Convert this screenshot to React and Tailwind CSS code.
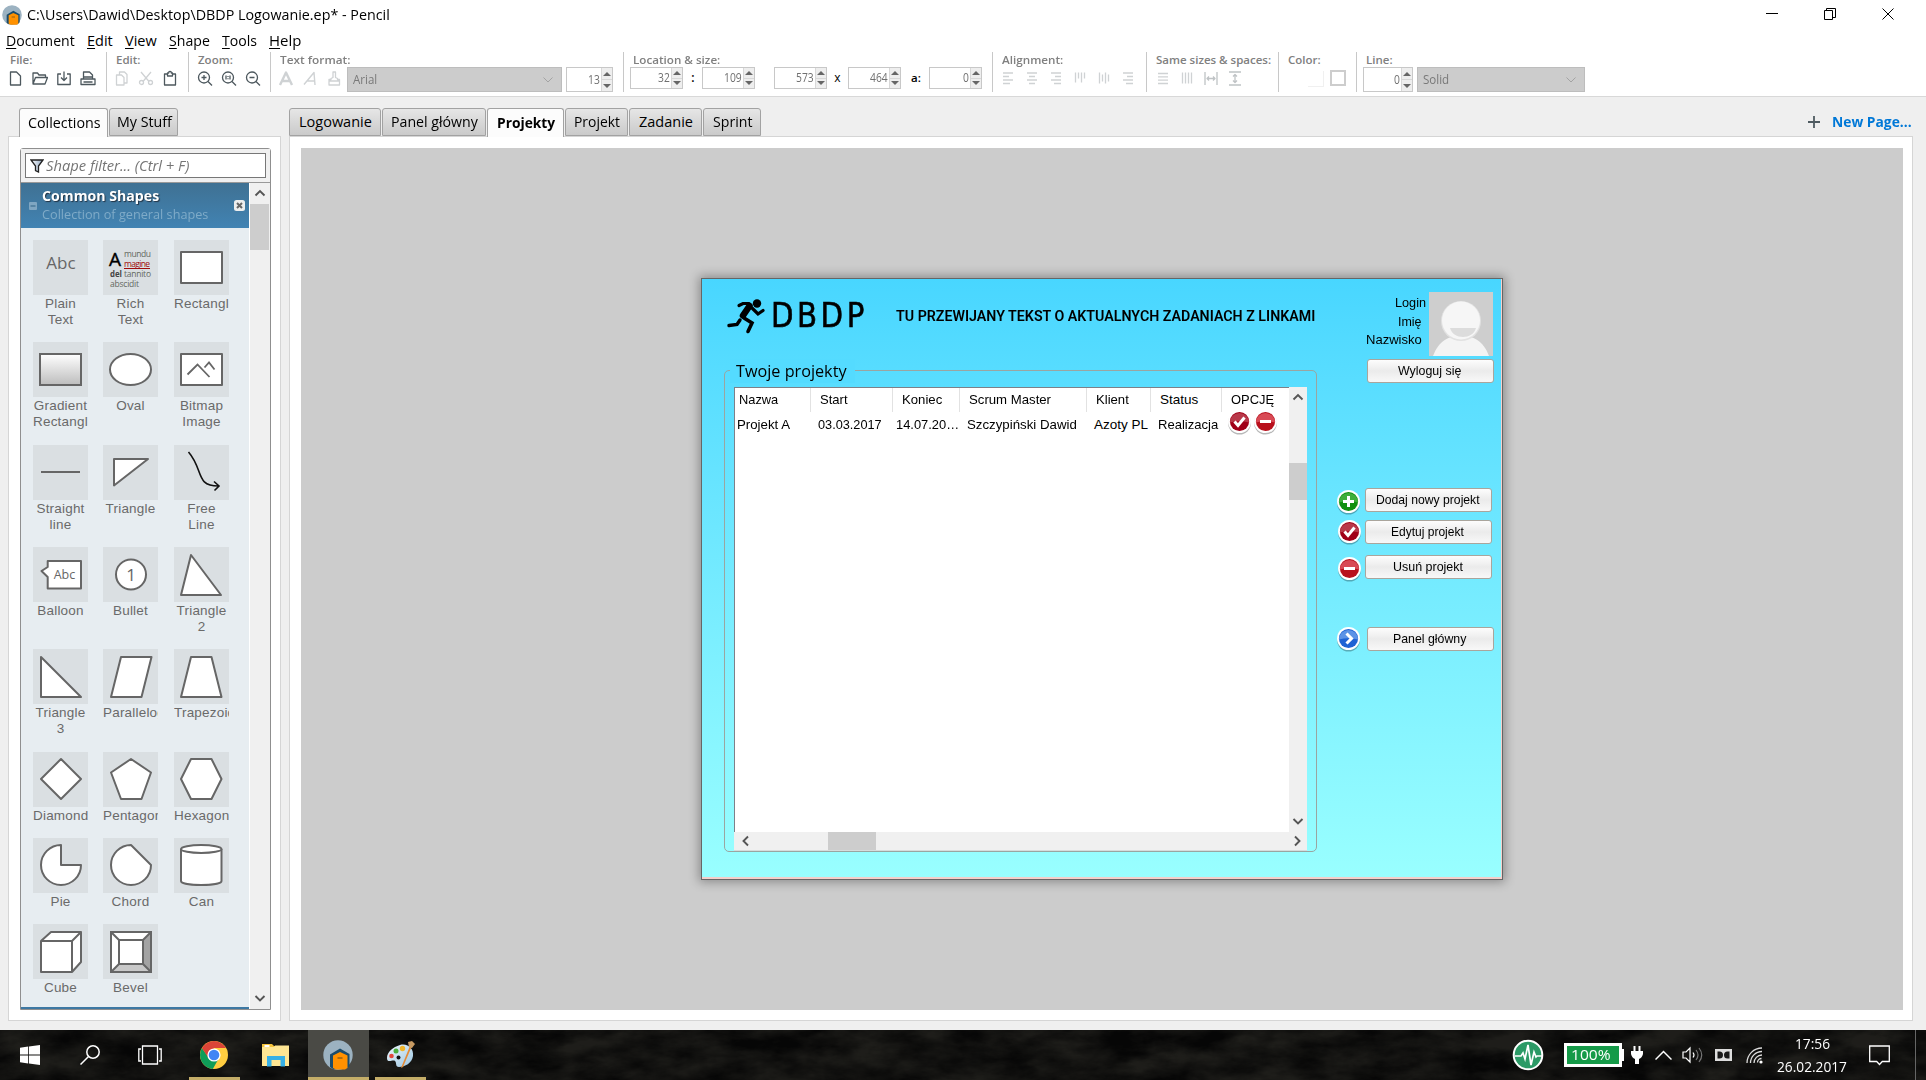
import React, { useLayoutEffect, useRef, useState } from "react";

/* Text condensed or widened to an exact run length. */
function Fit({ w, className = "", children }) {
  const ref = useRef(null);
  const [scale, setScale] = useState(1);
  useLayoutEffect(() => {
    const natural = ref.current.offsetWidth;
    if (natural) setScale(w / natural);
  }, [w]);
  return (
    <span className={"inline-block shrink-0 whitespace-nowrap text-left " + className} style={{ width: w }}>
      <span ref={ref} className="inline-block origin-left whitespace-nowrap" style={{ transform: `scaleX(${scale})` }}>
        {children}
      </span>
    </span>
  );
}

const ui = "font-['Open_Sans','Noto_Sans',sans-serif]";
const arial = "font-['Liberation_Sans',Arial,sans-serif]";

function PencilLogo({ className }) {
  return (
    <svg viewBox="0 0 30 30" preserveAspectRatio="none" className={className}>
      <circle cx="15" cy="15" r="14.7" fill="#9cb2c1" />
      <path d="M7 27V14.500L17 8.500l9.500 5.500V26l-3 3H10z" fill="#1b4c6b" />
      <path d="M10 28V15.500l7-3.500 7.500 3.500V28l-2.500 1.500h-9z" fill="#ff9100" />
      <path d="M14.500 18h5" stroke="#5d4a20" strokeWidth="1" />
    </svg>
  );
}

function TitleBar() {
  return (
    <div className="flex h-7 items-center">
      <PencilLogo className="ml-0.5 mt-0.5 h-5 w-5 shrink-0" />
      <Fit w={363} className="ml-[5px] mt-0.5 text-[14.5px] leading-5">C:\Users\Dawid\Desktop\DBDP Logowanie.ep* - Pencil</Fit>
      <div className="ml-auto mr-8 flex items-center gap-[46px]">
        <svg className="h-3 w-3" viewBox="0 0 12 12"><path d="M0 5.500h12" stroke="#000" /></svg>
        <svg className="h-3 w-3" viewBox="0 0 12 12" fill="none" stroke="#000"><path d="M.5 2.500h8v9h-8zM2.500 2.500v-2h9v9h-3" /></svg>
        <svg className="h-3 w-3" viewBox="0 0 12 12"><path d="M.5.500l11 11M11.500.500l-11 11" stroke="#000" /></svg>
      </div>
    </div>
  );
}

const menus = [
  ["Document", 69, "w-[81px]"],
  ["Edit", 26, "w-[38px]"],
  ["View", 32, "w-[44px]"],
  ["Shape", 41, "w-[53px]"],
  ["Tools", 35, "w-[47px]"],
  ["Help", 32, "w-[40px]"],
];

function MenuBar() {
  return (
    <div className="flex h-6 items-center pl-1.5">
      {menus.map(([m, w, box]) => (
        <div key={m} className={box}>
          <Fit w={w} className="text-[14.5px] leading-5">
            <span className="underline underline-offset-2">{m[0]}</span>{m.slice(1)}
          </Fit>
        </div>
      ))}
    </div>
  );
}

const D = "#4d585e";
const L = "#cfd2d4";
function Ico({ c = D, children, sw = 1.3 }) {
  return (
    <span className="flex w-6 shrink-0 items-center justify-center">
      <svg viewBox="0 0 16 16" className="h-4 w-4 -translate-y-[1.5px]" fill="none" stroke={c} strokeWidth={sw} strokeLinejoin="round">{children}</svg>
    </span>
  );
}

function Group({ label, lw, box, labelBox, children, last }) {
  return (
    <div className={"flex h-10 flex-col " + box + (last ? "" : " border-r border-[#c8c8c8]")}>
      <div className={"flex h-[15px] items-center " + labelBox}>
        <Fit w={lw} className="text-[11.5px] font-semibold leading-[15px] text-[#808080]">{label}</Fit>
      </div>
      <div className="flex h-[25px]">{children}</div>
    </div>
  );
}

function Spin({ v, vw, box }) {
  return (
    <div className={"flex shrink-0 justify-end border border-[#c8c8c8] bg-white " + box}>
      <Fit w={vw} className="mr-px self-center text-[12px] leading-4 text-[#707070]">{v}</Fit>
      <div className="flex w-[11px] flex-col gap-px border-l border-[#d8d8d8] bg-[#d8d8d8]">
        <div className="flex flex-1 items-center justify-center bg-[#eee]"><svg className="h-1 w-2" viewBox="0 0 8 4"><path d="M0 4l4-4 4 4z" fill="#666" /></svg></div>
        <div className="flex flex-1 items-center justify-center bg-[#eee]"><svg className="h-1 w-2" viewBox="0 0 8 4"><path d="M0 0l4 4 4-4z" fill="#666" /></svg></div>
      </div>
    </div>
  );
}

function Select({ v, vw, box }) {
  return (
    <div className={"flex h-[25px] shrink-0 items-center justify-between border border-[#bdbdbd] bg-[#ccc] pl-[5px] pr-2 " + box}>
      <Fit w={vw} className="text-[12px] leading-4 text-[#787878]">{v}</Fit>
      <svg className="h-1.5 w-2.5" viewBox="0 0 10 6" fill="none" stroke="#a3a3a3"><path d="M.5.500L5 5 9.500.500" /></svg>
    </div>
  );
}

function Toolbar() {
  return (
    <div className="flex h-[44px] text-black">
      <Group label="File:" lw={22} box="w-[107px] pl-1" labelBox="pl-1.5">
        <Ico><path d="M2.500 1.500h6l4 4v9h-10z" /></Ico>
        <Ico><path d="M1 13.500v-11h4.500l1.500 2h6.500v2.500M1 13.500L3.500 7H15.500L13 13.500z" /></Ico>
        <Ico><path d="M5 3.500H1.800v10.500h12.400V3.500H11M8 1v8.500M5 7l3 3 3-3" /></Ico>
        <Ico><path d="M3.500 8V1.500h6l3 3V8M1 8.500h14V14H1zM3.500 11.500h9M3.500 6.500h9" /></Ico>
      </Group>
      <Group label="Edit:" lw={24} box="w-[82px] pl-[3px]" labelBox="pl-1.5">
        <Ico c={L}><path d="M2.500 4.500h5l2.500 2.500v7.500H2.500zM5.500 4V1.500h5L13 4v8.500h-3" /></Ico>
        <Ico c={L}><path d="M3 1.500l8 9.500M13 1.500L5 11" /><circle cx="3.500" cy="12" r="2" /><circle cx="12.500" cy="12" r="2" /></Ico>
        <Ico><path d="M5 3.500H2.500v11h11v-11H11M5.500 5.500h5v-3h-1.200L8.800.800H7.200L6.700 2.500H5.500z" /></Ico>
      </Group>
      <Group label="Zoom:" lw={35} box="w-[82px] pl-1" labelBox="pl-[5px]">
        <Ico><circle cx="7" cy="7" r="5.500" /><path d="M11 11l4 4M4.500 7h5M7 4.500v5" /></Ico>
        <Ico><circle cx="7" cy="7" r="5.500" /><path d="M11 11l4 4M5 5v4M9 5v4M7 5.500v1M7 7.700v1" /></Ico>
        <Ico><circle cx="7" cy="7" r="5.500" /><path d="M11 11l4 4M4.500 7h5" /></Ico>
      </Group>
      <Group label="Text format:" lw={70} box="w-[353px] pl-[3px]" labelBox="pl-1.5">
        <Ico c={L} sw={2.4}><path d="M2 14.500L8 2l6 12.500M4.500 10.500h7" /></Ico>
        <Ico c={L} sw={1.4}><path d="M2 14L12 2l1 12.500M5.500 10.500h7.500" /></Ico>
        <Ico c={L}><path d="M3 14.500V9h2V8l2-1V1.500h2.500V7l2 1v1h2v5.500zM3 10.500h10.500" /></Ico>
        <Select v="Arial" vw={24} box="ml-px w-[215px]" />
        <Spin v="13" vw={12} box="ml-1 h-[25px] w-[47px]" />
      </Group>
      <Group label="Location & size:" lw={87} box="w-[369px] pl-1.5" labelBox="pl-[3px]">
        <Spin v="32" vw={12} box="h-[22px] w-[53px]" />
        <span className="w-[19px] pl-px pt-[3px] text-center text-[12px] font-semibold leading-4">:</span>
        <Spin v="109" vw={18} box="h-[22px] w-[53px]" />
        <Spin v="573" vw={18} box="ml-[19px] h-[22px] w-[53px]" />
        <span className="w-[21px] pt-[3px] text-center text-[12px] leading-4">x</span>
        <Spin v="464" vw={18} box="h-[22px] w-[53px]" />
        <span className="w-[28px] pl-0.5 pt-[3px] text-center text-[11.500px] font-semibold leading-4">a:</span>
        <Spin v="0" vw={6} box="h-[22px] w-[53px]" />
      </Group>
      <Group label="Alignment:" lw={61} box="w-[154px] pl-[3px]" labelBox="pl-1.5">
        <Ico c={L}><path d="M3 2.500h10M3 6h6M3 9.500h10M3 13h7" /></Ico>
        <Ico c={L}><path d="M3 2.500h10M5 6h6M3 9.500h10M5 13h6" /></Ico>
        <Ico c={L}><path d="M3 2.500h10M7 6h6M3 9.500h10M6 13h7" /></Ico>
        <Ico c={L}><path d="M3.500 2v10M6.500 2v6M9.500 2v10M12.500 2v6" /></Ico>
        <Ico c={L}><path d="M3.500 2v11M6.500 4v7M9.500 2v11M12.500 4v7" /></Ico>
        <Ico c={L}><path d="M3 2.500h10M7 6h6M3 9.500h10M6 13h7" /></Ico>
      </Group>
      <Group label="Same sizes & spaces:" lw={115} box="w-[132px] pl-1" labelBox="pl-[5px]">
        <Ico c={L}><path d="M3 3h10M3 6.300h10M3 9.600h10M3 13h10" /></Ico>
        <Ico c={L}><path d="M3.500 2v11M6.500 2v11M9.500 2v11M12.500 2v11" /></Ico>
        <Ico c="#bfc3c5"><path d="M2 1.500v13M14 1.500v13M4 8h8M6 6L4 8l2 2M10 6l2 2-2 2" /></Ico>
        <Ico c="#bfc3c5"><path d="M2 1.500h12M2 14.500h12M8 4v8M6 6l2-2 2 2M6 10l2 2 2-2" /></Ico>
      </Group>
      <Group label="Color:" lw={33} box="w-[78px]" labelBox="pl-[9px]">
        <span className="ml-[29px] mt-1 h-4 w-4 border-b border-r border-[#f0f0f0]" />
        <span className="ml-[6px] mt-[3px] h-4 w-4 border-2 border-[#cdcdcd]" />
      </Group>
      <Group label="Line:" lw={27} box="w-[240px] pl-1.5" labelBox="pl-[3px]" last>
        <Spin v="0" vw={6} box="h-[25px] w-[50px]" />
        <Select v="Solid" vw={26} box="ml-1 w-[168px]" />
      </Group>
    </div>
  );
}

function Tab({ label, w, box, active, bold }) {
  return (
    <div className={"flex items-center justify-center rounded-t-[3px] border border-[#a2a2a2] pl-px " + box + (active ? " relative z-10 h-[29px] border-b-0 bg-[#fcfcfc]" : " h-7 bg-linear-to-b from-[#e6e6e6] to-[#cacaca]")}>
      <Fit w={w} className={"text-[14.5px] leading-5 " + (bold ? "font-bold" : "")}>{label}</Fit>
    </div>
  );
}

const S = { fill: "#fff", stroke: "#666", strokeWidth: 2, strokeLinejoin: "round" };
const P = ({ d }) => <path d={d} {...S} />;

const shapes = [
  [["Plain", "Text"], <text x="28" y="29" textAnchor="middle" fontSize="17" fill="#666" className="font-['Open_Sans']">Abc</text>],
  [["Rich", "Text"], (
    <g className="font-['Open_Sans']" fontSize="8.500" fill="#64685f">
      <text x="6" y="26" fontSize="19" fill="#000" stroke="#000" strokeWidth=".4" textLength="12" lengthAdjust="spacingAndGlyphs">A</text>
      <text x="21" y="17" textLength="27">mundu</text>
      <text x="21" y="27" textLength="26" fill="#a00c0c">magine</text>
      <path d="M21 28.500h26" stroke="#a00c0c" />
      <text x="7" y="37" textLength="12" fontWeight="bold" fill="#444" lengthAdjust="spacingAndGlyphs">del</text>
      <text x="21" y="37" textLength="27">tannito</text>
      <text x="7" y="47" textLength="29">abscidit</text>
    </g>
  )],
  [["Rectangle"], <P d="M7 12h41v31H7z" />],
  [["Gradient", "Rectangle"], (
    <g>
      <defs><linearGradient id="gr" x1="0" y1="0" x2="0" y2="1"><stop offset="0" stopColor="#fff" /><stop offset="1" stopColor="#bdbdbd" /></linearGradient></defs>
      <rect x="7" y="12" width="41" height="31" fill="url(#gr)" stroke="#666" strokeWidth="2" />
    </g>
  )],
  [["Oval"], <ellipse cx="27.500" cy="27.500" rx="20.500" ry="15.500" {...S} />],
  [["Bitmap", "Image"], <g><P d="M7 12h41v31H7z" /><path d="M13.500 32.500l10-10 12 12.500M30.500 25.500l4.500-5 5.500 7" fill="none" stroke="#666" strokeWidth="1.800" /></g>],
  [["Straight", "line"], <P d="M8 27h39" />],
  [["Triangle"], <P d="M11 14h34L11 40.500z" />],
  [["Free", "Line"], <path d="M14.500 7C30 25 21 41 44.500 41M40 36.500l5 4.500-4.500 4.500" fill="none" stroke="#111" strokeWidth="1.600" />],
  [["Balloon"], (
    <g>
      <P d="M14.700 14H48v27.500H14.700V30L8.500 24l6.200-4z" />
      <text x="31.500" y="32" textAnchor="middle" fontSize="12.500" fill="#666" className="font-['Open_Sans']">Abc</text>
    </g>
  )],
  [["Bullet"], (
    <g>
      <circle cx="28" cy="27.500" r="15" {...S} />
      <text x="28" y="33.500" textAnchor="middle" fontSize="17" fill="#666" className="font-['Open_Sans']">1</text>
    </g>
  )],
  [["Triangle", "2"], <P d="M17 8l30 40H7z" />],
  [["Triangle", "3"], <P d="M8 8l40 40H8z" />],
  [["Parallelogram"], <P d="M18 8h30.500l-10 40H8z" />],
  [["Trapezoid"], <P d="M17 8h20.500l10 40H7z" />],
  [["Diamond"], <P d="M28 7l20 20-20 20L8 27z" />],
  [["Pentagon"], <P d="M28 7l20 13.500L38.500 47H18L8 20.500z" />],
  [["Hexagon"], <P d="M17 7h20.500l10 20-10 20H17L7 27z" />],
  [["Pie"], <P d="M28 27V7A20 20 0 1 0 48 27z" />],
  [["Chord"], <P d="M28 7A20 20 0 1 0 48 27z" />],
  [["Can"], <g><P d="M7 11v32c0 5.300 40.500 5.300 40.500 0V11" /><ellipse cx="27.250" cy="11" rx="20.250" ry="4" {...S} /></g>],
  [["Cube"], <g><P d="M8 17h31v31H8zM8 17l10-9h30l-9 9zM39 17l9-9v30l-9 10z" /></g>],
  [["Bevel"], (
    <g>
      <P d="M8 8h40v40H8z" />
      <path d="M48 8v40l-8-8V16z" fill="#a3a3a3" />
      <path d="M8 48h40l-8-8H16z" fill="#c9c9c9" />
      <P d="M16 16h24v24H16z" />
      <path d="M8 8h40v40H8zM8 8l8 8M48 8l-8 8M48 48l-8-8M8 48l8-8" fill="none" stroke="#666" strokeWidth="2" />
    </g>
  )],
];

function Chev({ dir, className = "" }) {
  const d = { up: "M1.500 7.500L6 3l4.500 4.500", down: "M1.500 4L6 8.500 10.500 4", left: "M8 1.500L3.500 6 8 10.500", right: "M4 1.500L8.500 6 4 10.500" }[dir];
  return <svg viewBox="0 0 12 12" className={"h-3 w-3 shrink-0 " + className} fill="none" stroke="#555" strokeWidth="1.900"><path d={d} /></svg>;
}

function Sidebar() {
  return (
    <div className="ml-2 w-[273px]">
      <div className="flex h-7 gap-px pl-[11px]">
        <Tab label="Collections" w={73} box="w-[89px]" active />
        <Tab label="My Stuff" w={55} box="w-[69px]" />
      </div>
      <div className="h-[885px] border border-[#d5d5d5] bg-white pl-[11px] pt-[11px]">
        <div className="flex h-[862px] w-[251px] flex-col rounded-t-[3px] border border-[#8f8f8f]">
          <div className="h-[34px] shrink-0 border-b border-[#999] bg-[#f0f0f0] pl-1 pt-1">
            <div className="flex h-[25px] w-[241px] items-center border border-[#777] bg-white">
              <svg className="ml-1 h-3.5 w-3.5" viewBox="0 0 14 14"><defs><linearGradient id="fn"><stop offset="0" stopColor="#fff" /><stop offset="1" stopColor="#8fa6c0" /></linearGradient></defs><path d="M1 1h12L8.500 7v6l-3-1.500V7z" fill="url(#fn)" stroke="#222" strokeWidth="1.300" /></svg>
              <Fit w={143} className="ml-0.5 text-[14px] italic leading-5 text-[#757575]">Shape filter... (Ctrl + F)</Fit>
            </div>
          </div>
          <div className="flex min-h-0 flex-1">
            <div className="flex w-[228px] flex-col border-b-2 border-[#3d78a3] bg-[#e7edf1]">
              <div className="flex h-[45px] shrink-0 items-center bg-linear-to-b from-[#3f7193] to-[#4183b3]">
                <svg className="ml-2 h-2 w-2" viewBox="0 0 8 8"><rect width="8" height="8" rx="1" fill="#7fa6c2" /><path d="M1.500 4h5" stroke="#2f6285" /></svg>
                <div className="-mt-0.5 ml-[5px] flex w-[170px] flex-col">
                  <Fit w={117} className="text-[14.500px] font-bold leading-[18px] text-white [text-shadow:1px_1px_1px_#234]">Common Shapes</Fit>
                  <Fit w={166} className="text-[13px] leading-[18px] text-[#7fabc8]">Collection of general shapes</Fit>
                </div>
                <svg className="ml-auto mr-1 h-[11px] w-[11px]" viewBox="0 0 11 11"><rect width="11" height="11" rx="2.500" fill="#eee" /><path d="M3 3l5 5M8 3L3 8" stroke="#666" strokeWidth="2" /></svg>
              </div>
              <div className="grid grid-cols-[70px_71px_55px] grid-rows-[102px_103px_102px_102px_103px_86px_86px_83px] pl-3 pt-3">
                {shapes.map(([label, art], i) => (
                  <div key={i} className="w-[55px]">
                    <svg viewBox="0 0 55 55" className="h-[55px] w-[55px] bg-[#dadfe2]">{art}</svg>
                    <div className={"w-[55px] overflow-hidden whitespace-nowrap pt-px text-center text-[13.500px] leading-4 tracking-[0.2px] text-[#6a6a6a] " + arial}>
                      {label.map((l) => <div key={l}>{l}</div>)}
                    </div>
                  </div>
                ))}
              </div>
            </div>
            <div className="ml-px flex w-5 flex-col items-center bg-[#f0f0f0]">
              <Chev dir="up" className="mb-1 mt-[5px]" />
              <div className="h-[46px] w-[19px] self-start bg-[#cdcdcd]" />
              <Chev dir="down" className="mb-[5px] mt-auto" />
            </div>
          </div>
        </div>
      </div>
    </div>
  );
}

const badge = {
  add: ["#3fae3a", "#12900f", "M11.500 6v11M6 11.500h11"],
  check: ["#b8394a", "#a00018", "M6.500 11.500l3.500 4 6.500-8"],
  minus: ["#d84a55", "#b8101c", "M6 11.500h11"],
  go: ["#5c93e6", "#1f63d4", "M9.500 6.500l5 5-5 5"],
};
function Badge({ kind, className }) {
  const [a, b, d] = badge[kind];
  return (
    <svg viewBox="0 0 24 26" className={"h-[26px] w-6 shrink-0 " + className}>
      <circle cx="11.500" cy="13" r="11.500" fill="#000" opacity=".28" />
      <circle cx="11.500" cy="11.500" r="11.500" fill="#fff" />
      <circle cx="11.500" cy="11.500" r="9.600" fill={b} />
      <path d="M1.900 12.500a9.600 9.600 0 0 1 19.200 0q-9.600-2.500-19.200 0z" fill={a} />
      <path d={d} stroke="#fff" strokeWidth="3" fill="none" />
    </svg>
  );
}

function Btn({ label, w, className }) {
  return (
    <div className={"absolute flex h-6 w-[127px] items-center justify-center rounded-[3px] border border-[#aaa59c] bg-linear-to-b from-[#fdfdfd] via-[#ebebeb] to-[#f8f8f8] pr-0.5 " + className}>
      <Fit w={w} className="text-[13px] leading-4">{label}</Fit>
    </div>
  );
}

const cols = [
  ["Nazwa", 39, "pl-1", "Projekt A", 53, "pl-0.5", "w-[76px]"],
  ["Start", 28, "pl-[9px]", "03.03.2017", 64, "pl-[7px]", "w-[82px]"],
  ["Koniec", 40, "pl-[9px]", "14.07.20…", 63, "pl-[3px]", "w-[67px]"],
  ["Scrum Master", 82, "pl-[9px]", "Szczypiński Dawid", 110, "pl-[7px]", "w-[127px]"],
  ["Klient", 33, "pl-[9px]", "Azoty PL", 54, "pl-[7px]", "w-[64px]"],
  ["Status", 38, "pl-[9px]", "Realizacja", 60, "pl-[7px]", "w-[71px]"],
  ["OPCJĘ", 43, "pl-[9px]", "", 0, "", "w-[66px]"],
];

function ProjectTable() {
  return (
    <div className="absolute left-[32px] top-[108px] flex h-[464px] w-[573px] flex-col">
      <div className="flex h-[445px]">
        <div className="w-[555px] border-l border-t border-[#7d8088] bg-white">
          <div className="flex h-[24px]">
            {cols.map(([h, w, pl, , , , box], i) => (
              <div key={h} className={"flex items-center pb-px " + pl + " " + box + (i < 6 ? " border-r border-[#e2e2e2]" : "")}>
                <Fit w={w} className="text-[13.500px] leading-4">{h}</Fit>
              </div>
            ))}
          </div>
          <div className="flex h-[24px] items-center">
            {cols.slice(0, 6).map(([, , , v, w, pl, box]) => (
              <div key={v} className={"shrink-0 " + pl + " " + box}>
                <Fit w={w} className="text-[13.500px] leading-4">{v}</Fit>
              </div>
            ))}
            <div className="flex gap-0.5 pl-1.5">
              <Badge kind="check" className="-translate-y-px" />
              <Badge kind="minus" className="-translate-y-px" />
            </div>
          </div>
        </div>
        <div className="flex w-[18px] flex-col items-center bg-[#f0f0f0]">
          <Chev dir="up" className="mt-[5px]" />
          <div className="mt-[59px] h-[37px] w-[18px] bg-[#cdcdcd]" />
          <Chev dir="down" className="mb-[5px] mt-auto" />
        </div>
      </div>
      <div className="flex h-[19px] items-center border-b border-[#d5dcdc] bg-[#f0f0f0]">
        <Chev dir="left" className="ml-[6px]" />
        <div className="ml-[76px] h-[18px] w-[48px] bg-[#cdcdcd]" />
        <Chev dir="right" className="ml-auto mr-1" />
      </div>
    </div>
  );
}

/* The mock-up page: widgets sit at free positions on the drawing canvas. */
function MockPage() {
  return (
    <div className={"relative ml-[400px] mt-[130px] h-[602px] w-[802px] border border-[#666] bg-linear-to-b from-[#48d6ff] to-[#99ffff] text-black shadow-[0_0_10px_2px_rgba(0,0,0,0.32)] " + arial}>
      <div className="absolute inset-0 border-b-2 border-r border-[#f4cfcb]" />
      <svg className="absolute left-[25px] top-[20px] h-[35px] w-[39px]" viewBox="0 0 39 35" fill="none" stroke="#000" strokeLinecap="round">
        <circle cx="30" cy="4.500" r="4.200" fill="#000" stroke="none" />
        <path d="M22.500 7L16 16.500" strokeWidth="6.500" />
        <path d="M22 4.500h-6l-4 2" strokeWidth="3.200" />
        <path d="M25 9l6 6 5-3.500" strokeWidth="3.200" />
        <path d="M13 21l-3 4.500-8 1" strokeWidth="3.400" />
        <path d="M17 19l8 5-4 8.500" strokeWidth="3.600" />
      </svg>
      <Fit w={97} className="absolute left-[69px] top-[17px] font-['DejaVu_Sans'] text-[33.500px] leading-[40px] tracking-[4px] [-webkit-text-stroke:0.6px_#000]">DBDP</Fit>
      <Fit w={419} className="absolute left-[194px] top-[28px] font-['Roboto'] text-[14.500px] font-semibold leading-5">TU PRZEWIJANY TEKST O AKTUALNYCH ZADANIACH Z LINKAMI</Fit>
      <Fit w={31} className="absolute left-[693px] top-[16px] text-[13.500px] leading-4">Login</Fit>
      <Fit w={24} className="absolute left-[696px] top-[35px] text-[13.500px] leading-4">Imię</Fit>
      <Fit w={56} className="absolute left-[664px] top-[53px] text-[13.500px] leading-4">Nazwisko</Fit>
      <svg className="absolute left-[727px] top-[13px] h-16 w-16 bg-[#cecece]" viewBox="0 0 64 64">
        <path d="M4 64C10 48 20 44 32 44s22 4 28 20z" fill="#f4f4f4" />
        <circle cx="32" cy="29" r="20" fill="#e2e2e2" />
        <circle cx="32" cy="28.500" r="19" fill="#f6f6f6" />
        <path d="M21 36h26c-3 12-23 12-26 0z" fill="#dcdcdc" />
      </svg>
      <Btn label="Wyloguj się" w={63} className="left-[665px] top-[80px]" />

      <div className="absolute left-[22px] top-[91px] h-[482px] w-[593px] rounded-[5px] border border-[#9aa5a1]" />
      <div className="absolute left-[28px] top-[80px] flex h-6 w-[125px] items-center bg-[#54dbff] pl-1.5">
        <Fit w={111} className="font-['Open_Sans','Noto_Sans',sans-serif] text-[16.500px] leading-6">Twoje projekty</Fit>
      </div>
      <ProjectTable />

      <Badge kind="add" className="absolute left-[635px] top-[211px]" />
      <Btn label="Dodaj nowy projekt" w={104} className="left-[663px] top-[209px]" />
      <Badge kind="check" className="absolute left-[636px] top-[241px]" />
      <Btn label="Edytuj projekt" w={73} className="left-[663px] top-[241px]" />
      <Badge kind="minus" className="absolute left-[636px] top-[278px]" />
      <Btn label="Usuń projekt" w={70} className="left-[663px] top-[276px]" />
      <Badge kind="go" className="absolute left-[635px] top-[348px]" />
      <Btn label="Panel główny" w={73} className="left-[665px] top-[348px]" />
    </div>
  );
}

function Workspace() {
  return (
    <div className="ml-2 w-[1624px]">
      <div className="flex h-7 gap-px">
        <Tab label="Logowanie" w={73} box="w-[92px]" />
        <Tab label="Panel główny" w={87} box="w-[104px]" />
        <Tab label="Projekty" w={58} box="w-[77px]" active bold />
        <Tab label="Projekt" w={46} box="w-[63px]" />
        <Tab label="Zadanie" w={54} box="w-[73px]" />
        <Tab label="Sprint" w={39} box="w-[58px]" />
        <div className="ml-auto mr-px flex items-center gap-3">
          <svg className="h-3 w-3" viewBox="0 0 12 12"><path d="M6 0v12M0 6h12" stroke="#4f5b61" strokeWidth="1.800" /></svg>
          <Fit w={80} className="text-[14px] font-bold leading-5 text-[#0078d7]">New Page...</Fit>
        </div>
      </div>
      <div className="h-[885px] border border-[#d5d5d5] bg-white pl-[11px] pt-[11px]">
        <div className="flow-root h-[862px] w-[1602px] overflow-hidden bg-[#ccc]">
          <MockPage />
        </div>
      </div>
    </div>
  );
}

function Taskbar() {
  return (
    <div className="relative flex h-[50px] w-full overflow-hidden bg-[#060606] text-white">
      <svg className="absolute inset-0 h-full w-full opacity-15">
        <filter id="rock"><feTurbulence type="fractalNoise" baseFrequency="0.02 0.045" numOctaves="6" seed="11" /><feColorMatrix values="0 0 0 0 .38  0 0 0 0 .36  0 0 0 0 .26  1.500 1.200 0 0 -.85" /></filter>
        <rect width="100%" height="100%" filter="url(#rock)" />
      </svg>
      <div className="relative flex w-full">
        <div className="flex w-[60px] items-center justify-center">
          <svg className="h-5 w-5" viewBox="0 0 20 20" fill="#fff"><path d="M0 2.800L8.200 1.600v8H0zM9 1.500L20 0v9.600H9zM0 10.400h8.200v8L0 17.200zM9 10.400h11V20L9 18.500z" /></svg>
        </div>
        <div className="flex w-[60px] items-center justify-center">
          <svg className="h-5 w-5" viewBox="0 0 20 20" fill="none" stroke="#fff" strokeWidth="1.500"><circle cx="13" cy="7" r="6.200" /><path d="M8.500 11.500L.500 19.500" /></svg>
        </div>
        <div className="flex w-[60px] items-center justify-center">
          <svg className="h-5 w-6" viewBox="0 0 24 20" fill="none" stroke="#fff" strokeWidth="1.300"><path d="M4.500 1h15v18h-15zM3 4H.800v12H3M21 4h2.200v12H21" /></svg>
        </div>
        <div className="ml-[9px] flex w-[51px] items-center justify-center border-b-[3px] border-[#c4ad68] pr-px">
          <svg className="mt-[3px] h-7 w-7" viewBox="0 0 28 28">
            <circle cx="14" cy="14" r="14" fill="#ffcd40" />
            <path d="M1.900 7A14 14 0 0 0 12.800 27.950L19 17 9 17z" fill="#0f9d58" />
            <path d="M14 7h12.100A14 14 0 0 0 1.900 7L8.500 17z" fill="#db4437" />
            <circle cx="14" cy="14" r="6.600" fill="#fff" /><circle cx="14" cy="14" r="5.300" fill="#4285f4" />
          </svg>
        </div>
        <div className="ml-[22px] flex w-7 items-center">
          <svg className="-mt-px h-6 w-7" viewBox="0 0 28 24"><path d="M0 1h10l2 2h1v4H0z" fill="#f5c33b" /><path d="M2.500 2h5v2h-5z" fill="#fff" /><path d="M0 4h12l1-1.500h14V23H0z" fill="#ffe693" /><path d="M5 23.500V13h18v10.500h-4.500V17h-9v6.500z" fill="#37b0e6" /></svg>
        </div>
        <div className="ml-[18px] flex w-[61px] items-center justify-center border-b-[3px] border-[#c4ad68] bg-[#4a4a45] pr-px">
          <PencilLogo className="mt-[3px] h-[30px] w-[30px]" />
        </div>
        <div className="ml-1.5 flex w-[51px] items-center justify-center border-b-[3px] border-[#c4ad68]">
          <svg className="mt-[2px] h-7 w-[30px]" viewBox="0 0 30 28">
            <defs><linearGradient id="pl" x1="0" y1="0" x2="1" y2="1"><stop offset="0" stopColor="#eef7fc" /><stop offset="1" stopColor="#9cc6e2" /></linearGradient></defs>
            <path d="M14 4C22 2 28 8 27 15S19 26 13 26c-4 0-2-4-4-6s-8 3-8-3S7 6 14 4z" fill="url(#pl)" />
            <circle cx="5.500" cy="15" r="2.300" fill="#e2473c" /><circle cx="10" cy="10" r="2.500" fill="#4cae3c" /><circle cx="16.500" cy="7.500" r="2.700" fill="#f1b52a" /><circle cx="12.500" cy="16.500" r="2" fill="#121212" />
            <path d="M15 27L23.500 6l1.800.500L17 26z" fill="#e58a34" /><path d="M23 6.500L22 1l4-1 3 3-3 4z" fill="#c79a62" />
          </svg>
        </div>

        <div className="ml-auto flex items-center">
          <svg className="h-8 w-8" viewBox="0 0 32 32"><circle cx="16" cy="16" r="14.300" fill="#2b9a66" stroke="#fff" strokeWidth="2" /><path d="M3 17h6l2-3 2 6 3-14 3 20 3-13 2 5 1-1h5" fill="none" stroke="#fff" strokeWidth="1.700" /></svg>
          <div className="ml-[20px] flex h-6 w-[58px] items-center justify-center border-[3px] border-white bg-[#159a48] pr-1">
            <Fit w={40} className="text-[14px] leading-4">100%</Fit>
          </div>
          <div className="h-3 w-0.5 bg-white" />
          <svg className="ml-[7px] h-[18px] w-3" viewBox="0 0 12 18" fill="#fff"><path d="M2.500 0h2v5h3V0h2v5H12v3q-1 4-4 5v5H4v-5Q1 12 0 8V5h2.500z" /></svg>
          <svg className="ml-3 h-2.5 w-[17px]" viewBox="0 0 17 10" fill="none" stroke="#fff" strokeWidth="1.500"><path d="M.500 9.500l8-8 8 8" /></svg>
          <svg className="ml-[10px] h-[18px] w-[22px]" viewBox="0 0 22 18" fill="none" stroke="#fff" strokeWidth="1.200"><path d="M1 6h3l4-4v14l-4-4H1zM11 6.500q2 2.500 0 5" /><path d="M14 4q4 5 0 10M17 2q5.500 7 0 14" stroke="#777" /></svg>
          <svg className="ml-[11px] h-3 w-[17px]" viewBox="0 0 17 12"><path d="M0 0h17v12H0z" fill="#ddd" /><path d="M2.500 2.500h2q3.500 0 3.500 3.500T4.500 9.500h-2zM14.500 2.500h-2Q9 2.500 9 6t3.500 3.500h2z" fill="#181818" /></svg>
          <svg className="ml-3.5 h-[17px] w-[17px]" viewBox="0 0 17 17" fill="none" stroke="#ddd" strokeWidth="1.300"><path d="M1 16A15 15 0 0 1 16 1M4.500 16A11.500 11.500 0 0 1 16 4.500M8 16a8 8 0 0 1 8-8" /><path d="M11.500 15.500a4 4 0 0 1 4-4" /><circle cx="15" cy="15" r="1.600" fill="#fff" stroke="none" /></svg>
          <div className="ml-[13px] flex w-[72px] flex-col items-center">
            <Fit w={35} className="text-[14.500px] leading-[23px]">17:56</Fit>
            <Fit w={70} className="text-[14.500px] leading-[23px]">26.02.2017</Fit>
          </div>
          <svg className="ml-[21px] h-[21px] w-[21px]" viewBox="0 0 21 21" fill="none" stroke="#fff" strokeWidth="1.300"><path d="M.700 1h19.600v15.500h-7L10.500 19.500 7.700 16.500h-7z" /></svg>
          <div className="ml-[25px] h-[50px] w-px bg-[#666]" />
          <div className="h-[50px] w-[10px]" />
        </div>
      </div>
    </div>
  );
}

export default function App() {
  return (
    <div className={"flex h-[1080px] w-[1926px] flex-col overflow-hidden bg-[#efefef] text-black " + ui}>
      <div className="h-[97px] shrink-0 border-b border-[#d8d8d8] bg-white">
        <TitleBar />
        <MenuBar />
        <Toolbar />
      </div>
      <div className="flex h-[933px] shrink-0 pt-[11px]">
        <Sidebar />
        <Workspace />
      </div>
      <Taskbar />
    </div>
  );
}
